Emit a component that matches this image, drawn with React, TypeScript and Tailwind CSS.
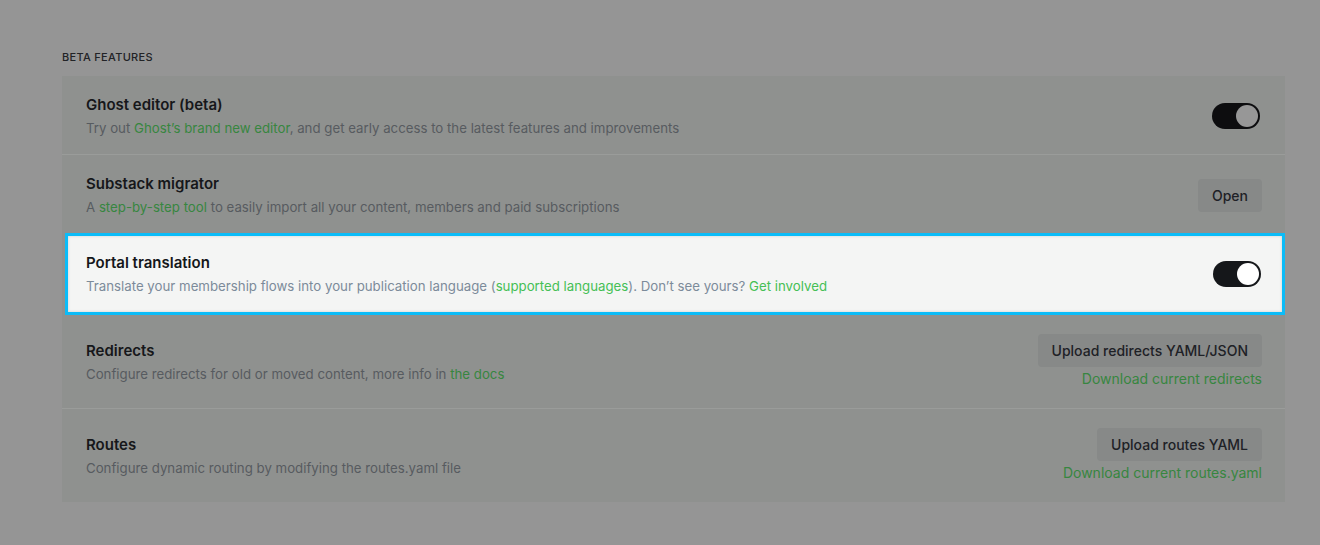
import { ReactNode } from "react";

const font = { fontFamily: "Inter, 'Noto Sans', sans-serif" };

const Toggle = ({ lit }: { lit?: boolean }) => (
  <div
    className={`mr-[2px] flex h-[26px] w-[48px] items-center justify-end rounded-full p-[2px] ${
      lit ? "bg-[#15171a]" : "bg-[#0d0d0f]"
    }`}
  >
    <div
      className={`h-[22px] w-[22px] rounded-full ${
        lit ? "bg-white" : "bg-[#979797]"
      }`}
    />
  </div>
);

const Btn = ({ children }: { children: ReactNode }) => (
  <button className="h-[33px] rounded-[4px] bg-[#878988] px-[14px] text-[14px] font-medium text-[#1e2126]">
    {children}
  </button>
);

const G = ({ children, lit }: { children: ReactNode; lit?: boolean }) => (
  <span className={lit ? "text-[#45bf55]" : "text-[#378640]"}>{children}</span>
);

const Row = ({
  title,
  desc,
  action,
  className = "",
  lit,
}: {
  title: string;
  desc: ReactNode;
  action: ReactNode;
  className?: string;
  lit?: boolean;
}) => (
  <div
    className={`flex items-center justify-between ${
      lit ? "pl-[18px] pr-[19px]" : "pl-6 pr-[23px]"
    } ${className}`}
  >
    <div className="flex flex-col gap-[2px]">
      <div
        className={`text-[15px] leading-[22px] font-semibold ${
          lit ? "text-[#15171a]" : "text-[#16171a]"
        }`}
      >
        {title}
      </div>
      <div
        className={`text-[13.25px] leading-[20px] ${
          lit ? "text-[#7c8b9a]" : "text-[#575b60]"
        }`}
      >
        {desc}
      </div>
    </div>
    {action}
  </div>
);

export default function App() {
  return (
    <div
      className="h-[545px] w-full overflow-hidden bg-[#959595] pl-[62px] pr-[35px] pt-[51px]"
      style={font}
    >
      <div className="text-[11px] font-medium uppercase leading-[12px] tracking-[0.3px] text-[#222326]">
        Beta features
      </div>
      <div className="mt-[13px] flex flex-col bg-[#8f918f]">
        <Row
          className="border-b border-[#9a9c9a] pt-[18px] pb-[16px]"
          title="Ghost editor (beta)"
          desc={
            <>
              Try out <G>Ghost’s brand new editor</G>, and get early access to the latest features and improvements
            </>
          }
          action={<Toggle />}
        />
        <Row
          className="pt-[18px] pb-[16px]"
          title="Substack migrator"
          desc={
            <>
              A <G>step-by-step tool</G> to easily import all your content, members and paid subscriptions
            </>
          }
          action={<Btn>Open</Btn>}
        />
        <Row
          lit
          className="ml-[3px] border-[3px] border-[#0bbcf8] bg-[#f4f5f4] py-[16px] shadow-[inset_0_0_3px_rgba(0,0,0,0.15)]"
          title="Portal translation"
          desc={
            <>
              Translate your membership flows into your publication language (<G lit>supported languages</G>). Don’t see yours? <G lit>Get involved</G>
            </>
          }
          action={<Toggle lit />}
        />
        <Row
          className="border-b border-[#9a9c9a] py-[19px]"
          title="Redirects"
          desc={
            <>
              Configure redirects for old or moved content, more info in <G>the docs</G>
            </>
          }
          action={
            <div className="flex flex-col items-end gap-[2px]">
              <Btn>Upload redirects YAML/JSON</Btn>
              <span className="text-[14px] leading-[20px] text-[#378640]">Download current redirects</span>
            </div>
          }
        />
        <Row
          className="py-[19px]"
          title="Routes"
          desc="Configure dynamic routing by modifying the routes.yaml file"
          action={
            <div className="flex flex-col items-end gap-[2px]">
              <Btn>Upload routes YAML</Btn>
              <span className="text-[14px] leading-[20px] text-[#378640]">Download current routes.yaml</span>
            </div>
          }
        />
      </div>
    </div>
  );
}
